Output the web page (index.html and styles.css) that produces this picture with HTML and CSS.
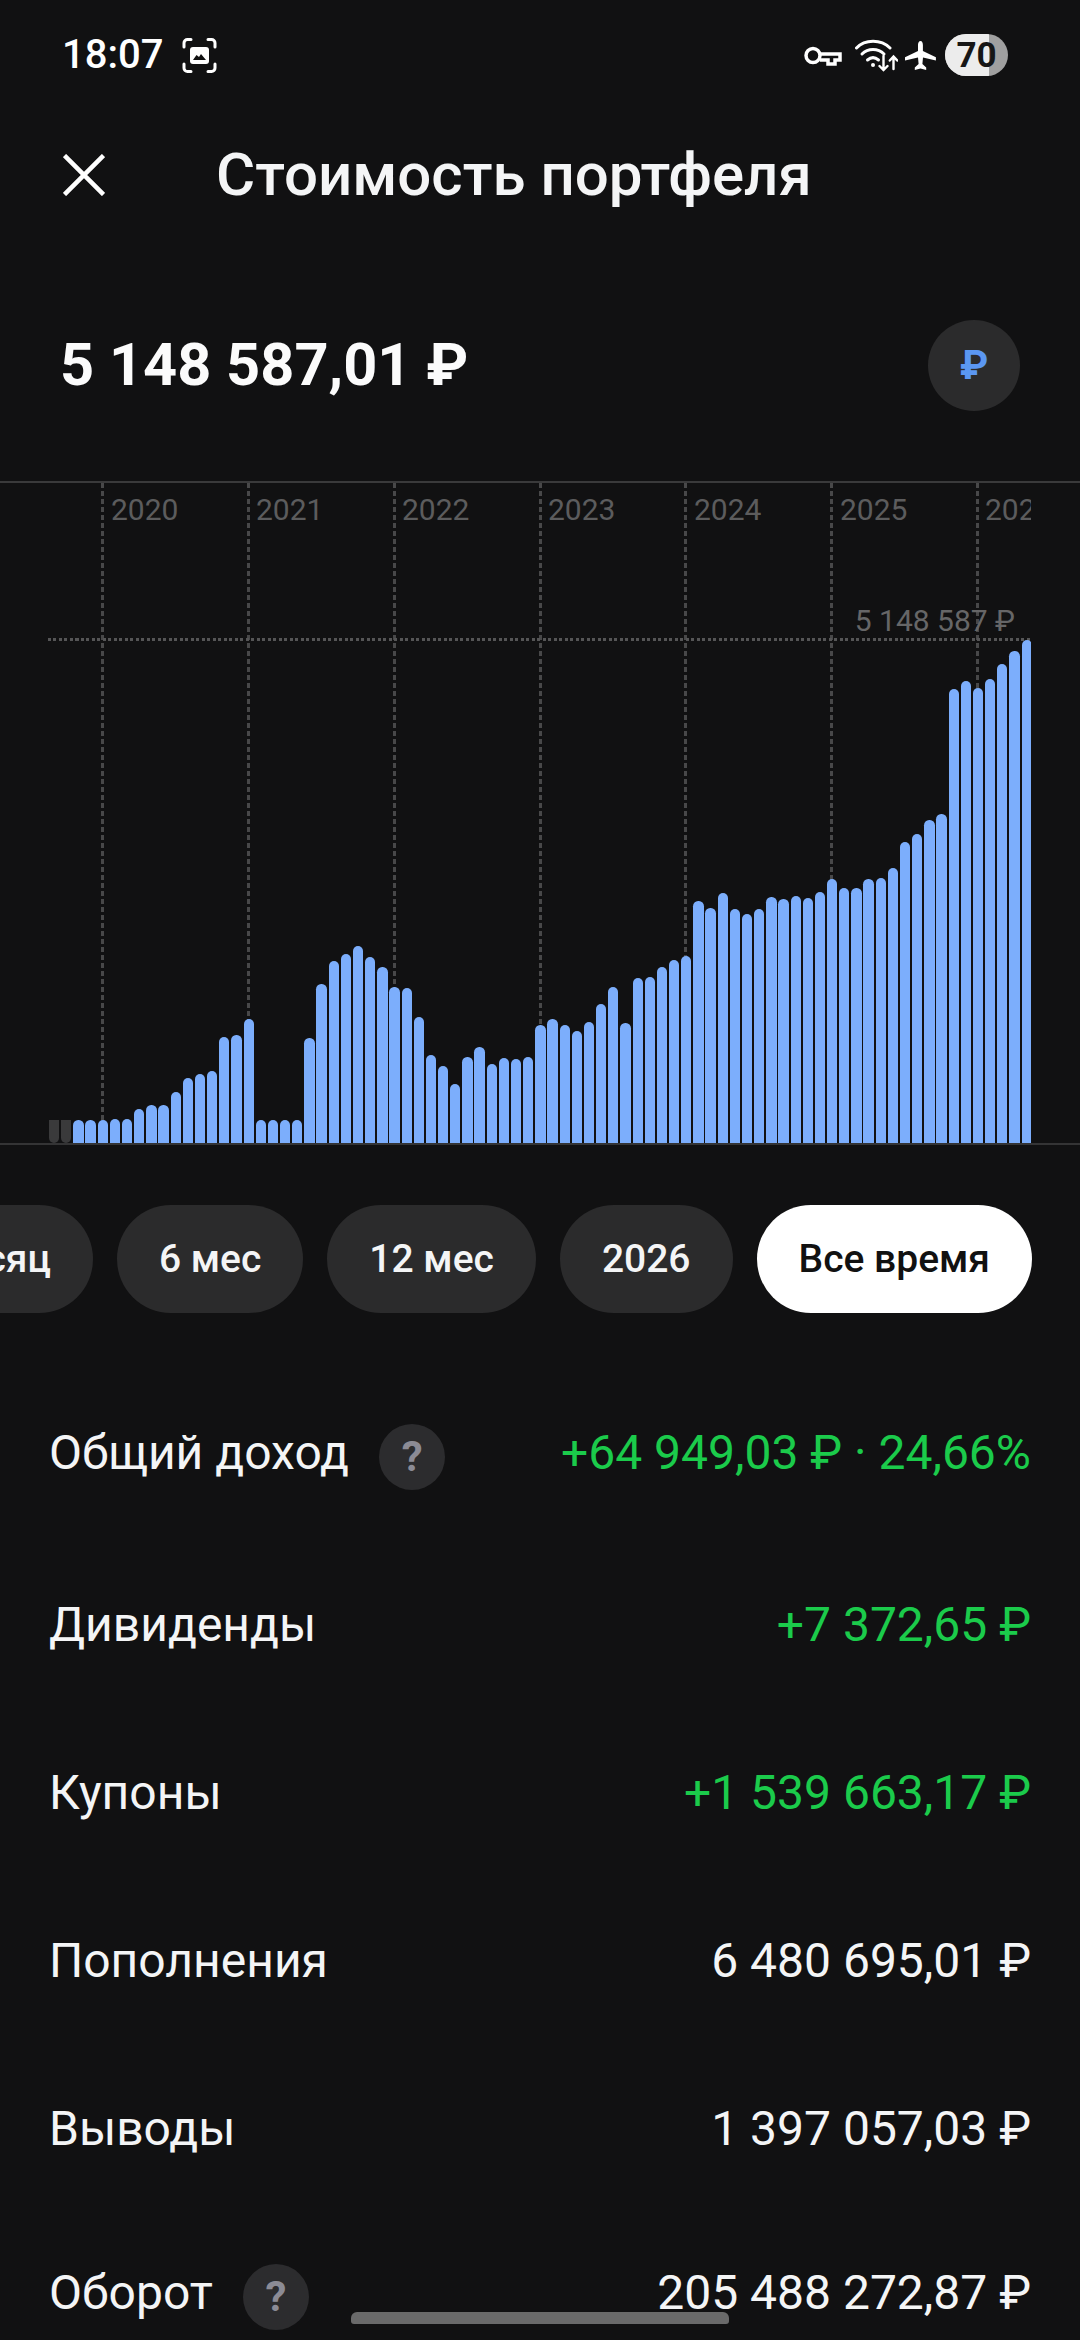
FILE: index.html
```html
<!DOCTYPE html>
<html lang="ru">
<head>
<meta charset="utf-8">
<title>Стоимость портфеля</title>
<link rel="stylesheet" href="styles.css">
</head>
<body>
<div class="screen">
  <div class="status">
    <div class="status-left">
      <span class="clock">18:07</span>
      <svg class="shot" viewBox="0 0 35 35" width="35" height="35" fill="none" stroke="#fff" stroke-width="3" stroke-linecap="round">
        <path d="M2 9V5a3.500 3.500 0 0 1 3.500-3.500H9M26 1.500h3.500A3.500 3.500 0 0 1 33 5v4M33 26v4a3.500 3.500 0 0 1-3.500 3.500H26M9 33.500H5.500A3.500 3.500 0 0 1 2 30v-4"/>
        <path fill="#fff" stroke="none" d="M11 9h13a3 3 0 0 1 3 3v11a3 3 0 0 1-3 3H11a3 3 0 0 1-3-3V12a3 3 0 0 1 3-3z"/>
        <path fill="#111" stroke="none" d="M11 22l3.500-5 2.500 2 2-3 5 6z"/>
      </svg>
    </div>
    <div class="status-right">
      <svg class="key" viewBox="0 0 38 21" width="38" height="21" fill="none" stroke="#fff" stroke-width="3.500">
        <circle cx="9" cy="10.500" r="7"/>
        <path d="M16 9h20v6h-5v4h-7v-4h-8"/>
      </svg>
      <svg class="wifi" viewBox="0 0 43 33" width="43" height="33" fill="none" stroke="#fff" stroke-width="3" stroke-linecap="round">
        <path d="M1.500 9C10 0 26 0 35 9"/>
        <path d="M7 15c6-6 16-6 22 0"/>
        <path d="M12.500 21c3.500-3 7.500-3 11 0"/>
        <circle cx="18" cy="26" r="2" fill="#fff" stroke="none"/>
        <path d="M28.500 17v14M24.500 27l4 4 4-4M38.500 30V18M34.800 21.500l3.700-4 3.700 4" stroke-width="2.400"/>
      </svg>
      <svg class="plane" viewBox="0 0 31 29" width="31" height="29" fill="#fff">
        <path d="M15.500 0c1.600 0 2.400 2 2.400 4v6l13 6.300v3.200L18 16.500l-.6 6.500 3.800 3.400V29l-5.700-1.500L9.800 29v-2.600l3.800-3.400-.6-6.500L0 19.500v-3.200L13 10V4c0-2 .9-4 2.500-4z"/>
      </svg>
      <div class="battery"><span class="battery-fill"></span><span class="battery-num">70</span></div>
    </div>
  </div>

  <header class="header">
    <svg class="close" viewBox="0 0 42 42" width="42" height="42" stroke="#fff" stroke-width="4.500" fill="none">
      <path d="M1.500 1.500l39 39M40.500 1.500l-39 39"/>
    </svg>
    <h1 class="title">Стоимость портфеля</h1>
  </header>

  <section class="total">
    <div class="total-value">5 148 587,01 ₽</div>
    <div class="currency">₽</div>
  </section>

  <section class="chart">
    <div class="plot">
      <div class="vline y2020"></div><div class="vline y2021"></div><div class="vline y2022"></div><div class="vline y2023"></div><div class="vline y2024"></div><div class="vline y2025"></div><div class="vline y2026"></div>
      <span class="year y2020">2020</span><span class="year y2021">2021</span><span class="year y2022">2022</span><span class="year y2023">2023</span><span class="year y2024">2024</span><span class="year y2025">2025</span><span class="year y2026">2026</span>
      <div class="hline"></div>
      <span class="max-label">5 148 587 ₽</span>
      <div class="bars">
        <i class="bar empty" style="height:23px"></i><i class="bar empty" style="height:23px"></i>
        <i class="bar" style="height:23px"></i><i class="bar" style="height:23px"></i><i class="bar" style="height:23px"></i><i class="bar" style="height:24.300px"></i><i class="bar" style="height:23.700px"></i><i class="bar" style="height:34px"></i><i class="bar" style="height:37.700px"></i><i class="bar" style="height:37.700px"></i><i class="bar" style="height:51px"></i><i class="bar" style="height:64.700px"></i><i class="bar" style="height:68.700px"></i><i class="bar" style="height:72px"></i><i class="bar" style="height:105.700px"></i><i class="bar" style="height:107.700px"></i><i class="bar" style="height:124px"></i>
        <i class="bar" style="height:23px"></i><i class="bar" style="height:23px"></i><i class="bar" style="height:23px"></i><i class="bar" style="height:23px"></i>
        <i class="bar" style="height:104.700px"></i><i class="bar" style="height:158.700px"></i><i class="bar" style="height:181.700px"></i><i class="bar" style="height:188.700px"></i><i class="bar" style="height:196.700px"></i><i class="bar" style="height:186px"></i><i class="bar" style="height:176.300px"></i><i class="bar" style="height:155.700px"></i><i class="bar" style="height:155.300px"></i><i class="bar" style="height:126px"></i><i class="bar" style="height:88.300px"></i><i class="bar" style="height:77.300px"></i><i class="bar" style="height:59.300px"></i><i class="bar" style="height:86px"></i><i class="bar" style="height:96.300px"></i><i class="bar" style="height:79.300px"></i><i class="bar" style="height:85px"></i><i class="bar" style="height:84px"></i><i class="bar" style="height:86px"></i><i class="bar" style="height:118px"></i>
        <i class="bar" style="height:124px"></i><i class="bar" style="height:117.700px"></i><i class="bar" style="height:111.700px"></i><i class="bar" style="height:120.700px"></i><i class="bar" style="height:138.700px"></i><i class="bar" style="height:156px"></i><i class="bar" style="height:120.300px"></i><i class="bar" style="height:164.700px"></i><i class="bar" style="height:166px"></i><i class="bar" style="height:175.700px"></i><i class="bar" style="height:183.300px"></i><i class="bar" style="height:186.700px"></i><i class="bar" style="height:242.300px"></i><i class="bar" style="height:234.700px"></i><i class="bar" style="height:249.700px"></i><i class="bar" style="height:234px"></i><i class="bar" style="height:228.700px"></i><i class="bar" style="height:233.700px"></i><i class="bar" style="height:246px"></i><i class="bar" style="height:243.700px"></i><i class="bar" style="height:246.700px"></i><i class="bar" style="height:245.300px"></i><i class="bar" style="height:251.300px"></i><i class="bar" style="height:263.700px"></i><i class="bar" style="height:255.300px"></i><i class="bar" style="height:255.300px"></i><i class="bar" style="height:263.700px"></i><i class="bar" style="height:265px"></i><i class="bar" style="height:274.700px"></i><i class="bar" style="height:301px"></i><i class="bar" style="height:308.700px"></i><i class="bar" style="height:322.700px"></i><i class="bar" style="height:329.300px"></i><i class="bar" style="height:454.300px"></i><i class="bar" style="height:461.700px"></i><i class="bar" style="height:455px"></i><i class="bar" style="height:464.300px"></i><i class="bar" style="height:479px"></i><i class="bar" style="height:492px"></i><i class="bar" style="height:503px"></i>
      </div>
    </div>
  </section>

  <nav class="ranges">
    <span class="range">Месяц</span>
    <span class="range">6 мес</span>
    <span class="range">12 мес</span>
    <span class="range">2026</span>
    <span class="range active">Все время</span>
  </nav>

  <section class="rows">
    <div class="row row-help"><div class="row-label">Общий доход<span class="help">?</span></div><div class="row-value green">+64 949,03 ₽ · 24,66%</div></div>
    <div class="row"><div class="row-label">Дивиденды</div><div class="row-value green">+7 372,65 ₽</div></div>
    <div class="row"><div class="row-label">Купоны</div><div class="row-value green">+1 539 663,17 ₽</div></div>
    <div class="row"><div class="row-label">Пополнения</div><div class="row-value">6 480 695,01 ₽</div></div>
    <div class="row"><div class="row-label">Выводы</div><div class="row-value">1 397 057,03 ₽</div></div>
    <div class="row row-help"><div class="row-label">Оборот<span class="help">?</span></div><div class="row-value">205 488 272,87 ₽</div></div>
  </section>

  <div class="home-bar"></div>
</div>
</body>
</html>
```
FILE: styles.css
```css
* { box-sizing: border-box; }
html, body { margin: 0; padding: 0; background: #111112; }
body { font-family: Roboto, "Noto Sans", sans-serif; color: #f4f5f6; }
.screen { position: relative; width: 1080px; height: 2340px; overflow: hidden; background: #111112; }

.status { height: 110px; padding: 0 72px 0 62px; display: flex; align-items: center; justify-content: space-between; }
.status-left { display: flex; align-items: center; gap: 19px; }
.clock { font-size: 40px; font-weight: 500; color: #fff; line-height: 1; }
.shot { display: block; }
.status-right { display: flex; align-items: center; }
.key { margin-right: 13px; }
.wifi { margin-right: 7px; }
.plane { margin-right: 9px; }
.battery { position: relative; width: 63px; height: 42px; border-radius: 21px; overflow: hidden; background: #a0a0a0; display: flex; align-items: center; justify-content: center; }
.battery-fill { position: absolute; left: 0; top: 0; bottom: 0; width: 44px; background: #ececec; }
.battery-num { position: relative; font-size: 35px; font-weight: 700; color: #161616; line-height: 1; }

.header { height: 130px; padding-left: 63px; display: flex; align-items: center; gap: 111px; }
.close { display: block; }
.title { margin: 0; font-size: 60px; font-weight: 500; color: #f4f5f6; line-height: 1; }

.total { height: 241px; padding: 80px 60px 0 60px; display: flex; justify-content: space-between; align-items: flex-start; }
.total-value { font-size: 59.500px; font-weight: 700; color: #fbfbfb; line-height: 90px; }
.currency { width: 92px; height: 91px; border-radius: 50%; background: #2b2b2c; color: #5b97f2; font-size: 40px; font-weight: 700; display: flex; align-items: center; justify-content: center; }

.chart { height: 664px; border-top: 2px solid #3a3a3b; border-bottom: 2px solid #343435; }
.plot { position: relative; margin-left: 48px; width: 983px; height: 660px; overflow: hidden; }
.vline { position: absolute; top: 0; bottom: 0; width: 3px; background: repeating-linear-gradient(to bottom, #484849 0 5px, transparent 5px 8px); }
.year { position: absolute; top: 9px; font-size: 30px; line-height: 36px; color: #5c5c5d; }
.vline.y2020 { left: 53px; } .year.y2020 { left: 63px; }
.vline.y2021 { left: 199px; } .year.y2021 { left: 208px; }
.vline.y2022 { left: 345px; } .year.y2022 { left: 354px; }
.vline.y2023 { left: 491px; } .year.y2023 { left: 500px; }
.vline.y2024 { left: 636px; } .year.y2024 { left: 646px; }
.vline.y2025 { left: 782px; } .year.y2025 { left: 792px; }
.vline.y2026 { left: 928px; } .year.y2026 { left: 937px; }
.hline { position: absolute; left: 0; right: 0; top: 155px; height: 3px; background: repeating-linear-gradient(to right, #555556 0 3px, transparent 3px 5.500px); }
.max-label { position: absolute; right: 16px; top: 120px; font-size: 30px; line-height: 36px; color: #666667; }
.bars { position: absolute; left: 1px; right: 0; bottom: 0; height: 100%; display: flex; align-items: flex-end; gap: 1.860px; }
.bar { display: block; flex: 0 0 10.300px; background: #7caefc; border-radius: 5.150px 5.150px 0 0; }
.bar.empty { background: #3a3a3b; border-radius: 0 0 5.150px 5.150px; }

.ranges { margin-top: 60px; height: 108px; padding-right: 48px; display: flex; justify-content: flex-end; gap: 24px; overflow: hidden; }
.range { flex: 0 0 auto; height: 108px; padding: 0 42px; border-radius: 54px; background: #2b2b2c; color: #f4f5f6; font-size: 39px; font-weight: 500; line-height: 108px; }
.range.active { background: #fff; color: #111; }

.rows { margin-top: 59px; padding: 0 49px; }
.row { height: 168px; display: flex; align-items: center; justify-content: space-between; font-size: 48px; color: #f4f5f6; }
.row-help { padding-bottom: 8px; }
.row-label { display: flex; align-items: center; }
.help { margin: 10px 0 0 30px; width: 66px; height: 66px; border-radius: 50%; background: #2c2c2e; color: #8b8b95; font-size: 42px; font-weight: 700; line-height: 1; display: flex; align-items: center; justify-content: center; }
.green { color: #1bcb4b; }

.home-bar { position: absolute; left: 351px; top: 2312px; width: 378px; height: 12px; border-radius: 6px 6px 3px 3px; background: #6a6a6a; }
```
